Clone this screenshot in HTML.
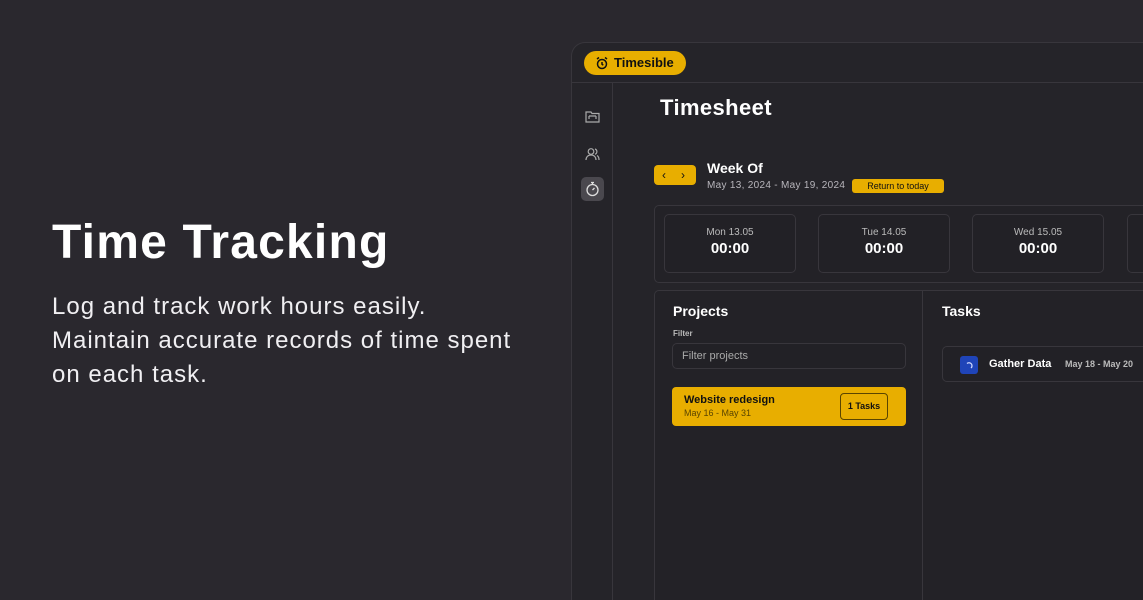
<!DOCTYPE html>
<html><head><style>
*{margin:0;padding:0;box-sizing:border-box}
html,body{width:1143px;height:600px;overflow:hidden}
body{background:#2a282e;font-family:"Liberation Sans",sans-serif;position:relative;color:#fff}
.a{position:absolute}
h1{position:absolute;left:52px;top:215px;font-size:48px;font-weight:700;letter-spacing:1.2px}
.sub{position:absolute;left:52px;top:290px;font-size:24px;line-height:34px;color:#f0eff2;letter-spacing:1px}
.app{left:571px;top:42px;width:572px;height:558px;background:#252429;border:1px solid #38363c;border-right:0;border-bottom:0;border-radius:14px 0 0 0;overflow:hidden}
.hdr{left:0;top:0;width:572px;height:40px;border-bottom:1px solid #38363c}
.logo{left:12px;top:8px;width:102px;height:24px;background:#e8ae00;border-radius:12px;color:#111;font-weight:700;font-size:13px;line-height:24px;padding-left:30px}
.side{left:0;top:40px;width:41px;height:518px;border-right:1px solid #38363c}
.y{background:#e8ae00;color:#111}
.card{background:#222126;border:1px solid #38363c;border-radius:5px}
.day{width:132px;height:59px;top:214px;text-align:center}
.day .d{font-size:10px;color:#bbb;margin-top:12px}
.day .t{font-size:15px;font-weight:700;margin-top:2px}
</style></head><body>
<h1>Time Tracking</h1>
<div class="sub">Log and track work hours easily.<br>Maintain accurate records of time spent<br>on each task.</div>
<div class="a app">
 <div class="a hdr"><div class="a logo"><svg class="a" style="left:11px;top:5px" width="14" height="14" viewBox="0 0 14 14" fill="none" stroke="#111" stroke-width="1.5"><circle cx="7" cy="8" r="4.5"/><path d="M7 6v2.2l1.3 1M2 3l2-1.5M12 3l-2-1.5"/></svg>Timesible</div></div>
 <div class="a side">
  <svg class="a" style="left:13px;top:27px" width="15" height="14" viewBox="0 0 15 14" fill="none" stroke="#aaa" stroke-width="1.2"><path d="M1 2h5l1 1.5h7V12H1z"/><path d="M4 6h7M4 6v3M11 6v3"/></svg>
  <svg class="a" style="left:13px;top:64px" width="15" height="14" viewBox="0 0 15 14" fill="none" stroke="#aaa" stroke-width="1.2"><circle cx="6" cy="4.5" r="2.8"/><path d="M1 13c0-3 2-5 5-5s5 2 5 5M10 2a2.8 2.8 0 010 5.3M12 8.5c1.3.7 2 2.3 2 4.5"/></svg>
  <div class="a" style="left:9px;top:94px;width:23px;height:24px;background:#4a484e;border-radius:5px"></div>
  <svg class="a" style="left:13px;top:98px" width="15" height="16" viewBox="0 0 15 16" fill="none" stroke="#ddd" stroke-width="1.3"><circle cx="7.5" cy="9" r="5.5"/><path d="M6 1.5h3M7.5 1.5v2M7.5 9l2-2"/></svg>
 </div>
</div>
<div class="a" style="left:660px;top:95px;font-size:22px;font-weight:700;letter-spacing:0.4px">Timesheet</div>
<div class="a y" style="left:654px;top:165px;width:42px;height:20px;border-radius:4px;font-size:12px;line-height:20px"><span class="a" style="left:8px">‹</span><span class="a" style="left:27px">›</span></div>
<div class="a" style="left:707px;top:160px;font-size:14px;font-weight:700">Week Of</div>
<div class="a" style="left:707px;top:180px;font-size:10px;color:#b8b6bc;letter-spacing:0.3px">May 13, 2024 - May 19, 2024</div>
<div class="a y" style="left:852px;top:179px;width:92px;height:14px;border-radius:3px;font-size:9px;line-height:14px;text-align:center">Return to today</div>
<div class="a card" style="left:654px;top:205px;width:489px;height:78px;background:#232227;border-right:0;border-radius:5px 0 0 5px"></div>
<div class="a card day" style="left:664px"><div class="d">Mon 13.05</div><div class="t">00:00</div></div>
<div class="a card day" style="left:818px"><div class="d">Tue 14.05</div><div class="t">00:00</div></div>
<div class="a card day" style="left:972px"><div class="d">Wed 15.05</div><div class="t">00:00</div></div>
<div class="a card day" style="left:1127px;width:16px;border-right:0;border-radius:5px 0 0 5px"></div>
<div class="a card" style="left:654px;top:290px;width:269px;height:310px;background:#232227;border-bottom:0;border-radius:5px 0 0 0"></div>
<div class="a card" style="left:922px;top:290px;width:221px;height:310px;background:#232227;border-bottom:0;border-right:0;border-radius:0"></div>
<div class="a" style="left:673px;top:303px;font-size:14px;font-weight:700">Projects</div>
<div class="a" style="left:673px;top:329px;font-size:8px;font-weight:700;color:#bbb">Filter</div>
<div class="a card" style="left:672px;top:343px;width:234px;height:26px;font-size:11px;color:#aaa;line-height:24px;padding-left:9px">Filter projects</div>
<div class="a y" style="left:672px;top:387px;width:234px;height:39px;border-radius:4px">
 <div class="a" style="left:12px;top:7px;font-size:11px;font-weight:700">Website redesign</div>
 <div class="a" style="left:12px;top:21px;font-size:9px;color:#5a4500">May 16 - May 31</div>
 <div class="a" style="left:168px;top:6px;width:48px;height:27px;border:1px solid #5a4500;border-radius:4px;font-size:9px;font-weight:700;line-height:25px;text-align:center">1 Tasks</div>
</div>
<div class="a" style="left:942px;top:303px;font-size:14px;font-weight:700">Tasks</div>
<div class="a card" style="left:942px;top:346px;width:201px;height:36px;border-right:0;border-radius:5px 0 0 5px"></div>
<div class="a" style="left:960px;top:356px;width:18px;height:18px;background:#1f44b8;border-radius:3px"></div>
<svg class="a" style="left:964px;top:360px" width="10" height="10" viewBox="0 0 10 10" fill="none" stroke="#cfd8ff" stroke-width="1.3"><path d="M3 3.5a2.7 2.7 0 114 4.5"/></svg>
<div class="a" style="left:989px;top:358px;font-size:11px;font-weight:700">Gather Data</div>
<div class="a" style="left:1065px;top:359px;font-size:9px;color:#bbb;font-weight:700">May 18 - May 20</div>
</body></html>
